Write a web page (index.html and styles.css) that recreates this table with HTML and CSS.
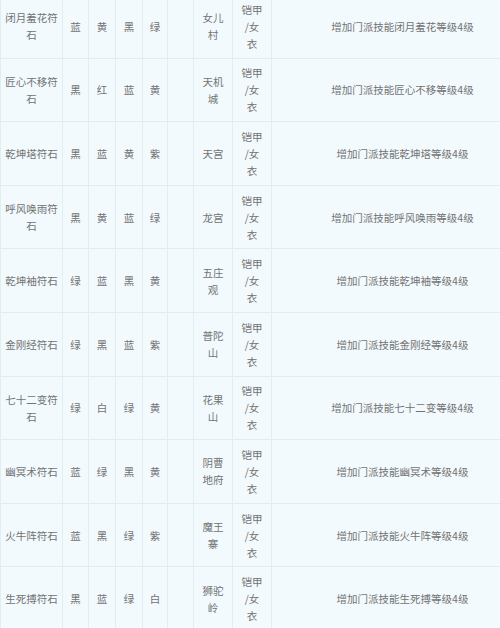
FILE: index.html
```html
<!DOCTYPE html>
<html lang="zh-CN">
<head>
<meta charset="utf-8">
<title>符石</title>
<link rel="stylesheet" href="styles.css">
</head>
<body>
<div class="page">
<table class="stones">
<colgroup>
<col class="c-name"><col class="c-a"><col class="c-b"><col class="c-b"><col class="c-c"><col class="c-a"><col class="c-s"><col class="c-s"><col class="c-d">
</colgroup>
<tbody>
<tr><td>闭月羞花符<br>石</td><td>蓝</td><td>黄</td><td>黑</td><td>绿</td><td></td><td>女儿<br>村</td><td>铠甲<br>/女<br>衣</td><td>增加门派技能闭月羞花等级4级</td></tr>
<tr><td>匠心不移符<br>石</td><td>黑</td><td>红</td><td>蓝</td><td>黄</td><td></td><td>天机<br>城</td><td>铠甲<br>/女<br>衣</td><td>增加门派技能匠心不移等级4级</td></tr>
<tr><td>乾坤塔符石</td><td>黑</td><td>蓝</td><td>黄</td><td>紫</td><td></td><td>天宫</td><td>铠甲<br>/女<br>衣</td><td>增加门派技能乾坤塔等级4级</td></tr>
<tr><td>呼风唤雨符<br>石</td><td>黑</td><td>黄</td><td>蓝</td><td>绿</td><td></td><td>龙宫</td><td>铠甲<br>/女<br>衣</td><td>增加门派技能呼风唤雨等级4级</td></tr>
<tr><td>乾坤袖符石</td><td>绿</td><td>蓝</td><td>黑</td><td>黄</td><td></td><td>五庄<br>观</td><td>铠甲<br>/女<br>衣</td><td>增加门派技能乾坤袖等级4级</td></tr>
<tr><td>金刚经符石</td><td>绿</td><td>黑</td><td>蓝</td><td>紫</td><td></td><td>普陀<br>山</td><td>铠甲<br>/女<br>衣</td><td>增加门派技能金刚经等级4级</td></tr>
<tr><td>七十二变符<br>石</td><td>绿</td><td>白</td><td>绿</td><td>黄</td><td></td><td>花果<br>山</td><td>铠甲<br>/女<br>衣</td><td>增加门派技能七十二变等级4级</td></tr>
<tr><td>幽冥术符石</td><td>蓝</td><td>绿</td><td>黑</td><td>黄</td><td></td><td>阴曹<br>地府</td><td>铠甲<br>/女<br>衣</td><td>增加门派技能幽冥术等级4级</td></tr>
<tr><td>火牛阵符石</td><td>蓝</td><td>黑</td><td>绿</td><td>紫</td><td></td><td>魔王<br>寨</td><td>铠甲<br>/女<br>衣</td><td>增加门派技能火牛阵等级4级</td></tr>
<tr><td>生死搏符石</td><td>黑</td><td>蓝</td><td>绿</td><td>白</td><td></td><td>狮驼<br>岭</td><td>铠甲<br>/女<br>衣</td><td>增加门派技能生死搏等级4级</td></tr>
</tbody>
</table>
</div>
</body>
</html>
```
FILE: styles.css
```css
html, body {
  margin: 0;
  padding: 0;
  background: #f2fafd;
}
.page {
  width: 500px;
  height: 628px;
  overflow: hidden;
  background: #f2fafd;
}
.stones {
  border-collapse: collapse;
  table-layout: fixed;
  width: 533px;
  margin-top: -6px;
  font-family: "Noto Sans CJK SC", "Noto Sans", sans-serif;
  font-size: 10.5px;
  line-height: 17px;
  color: #737373;
}
.stones td {
  border: 1px solid #e2edf2;
  padding: 5.8px 2px;
  text-align: center;
  vertical-align: middle;
}
.c-name { width: 62px; }
.c-a { width: 26px; }
.c-b { width: 27px; }
.c-c { width: 25px; }
.c-s { width: 39px; }
.c-d { width: 262px; }
```
